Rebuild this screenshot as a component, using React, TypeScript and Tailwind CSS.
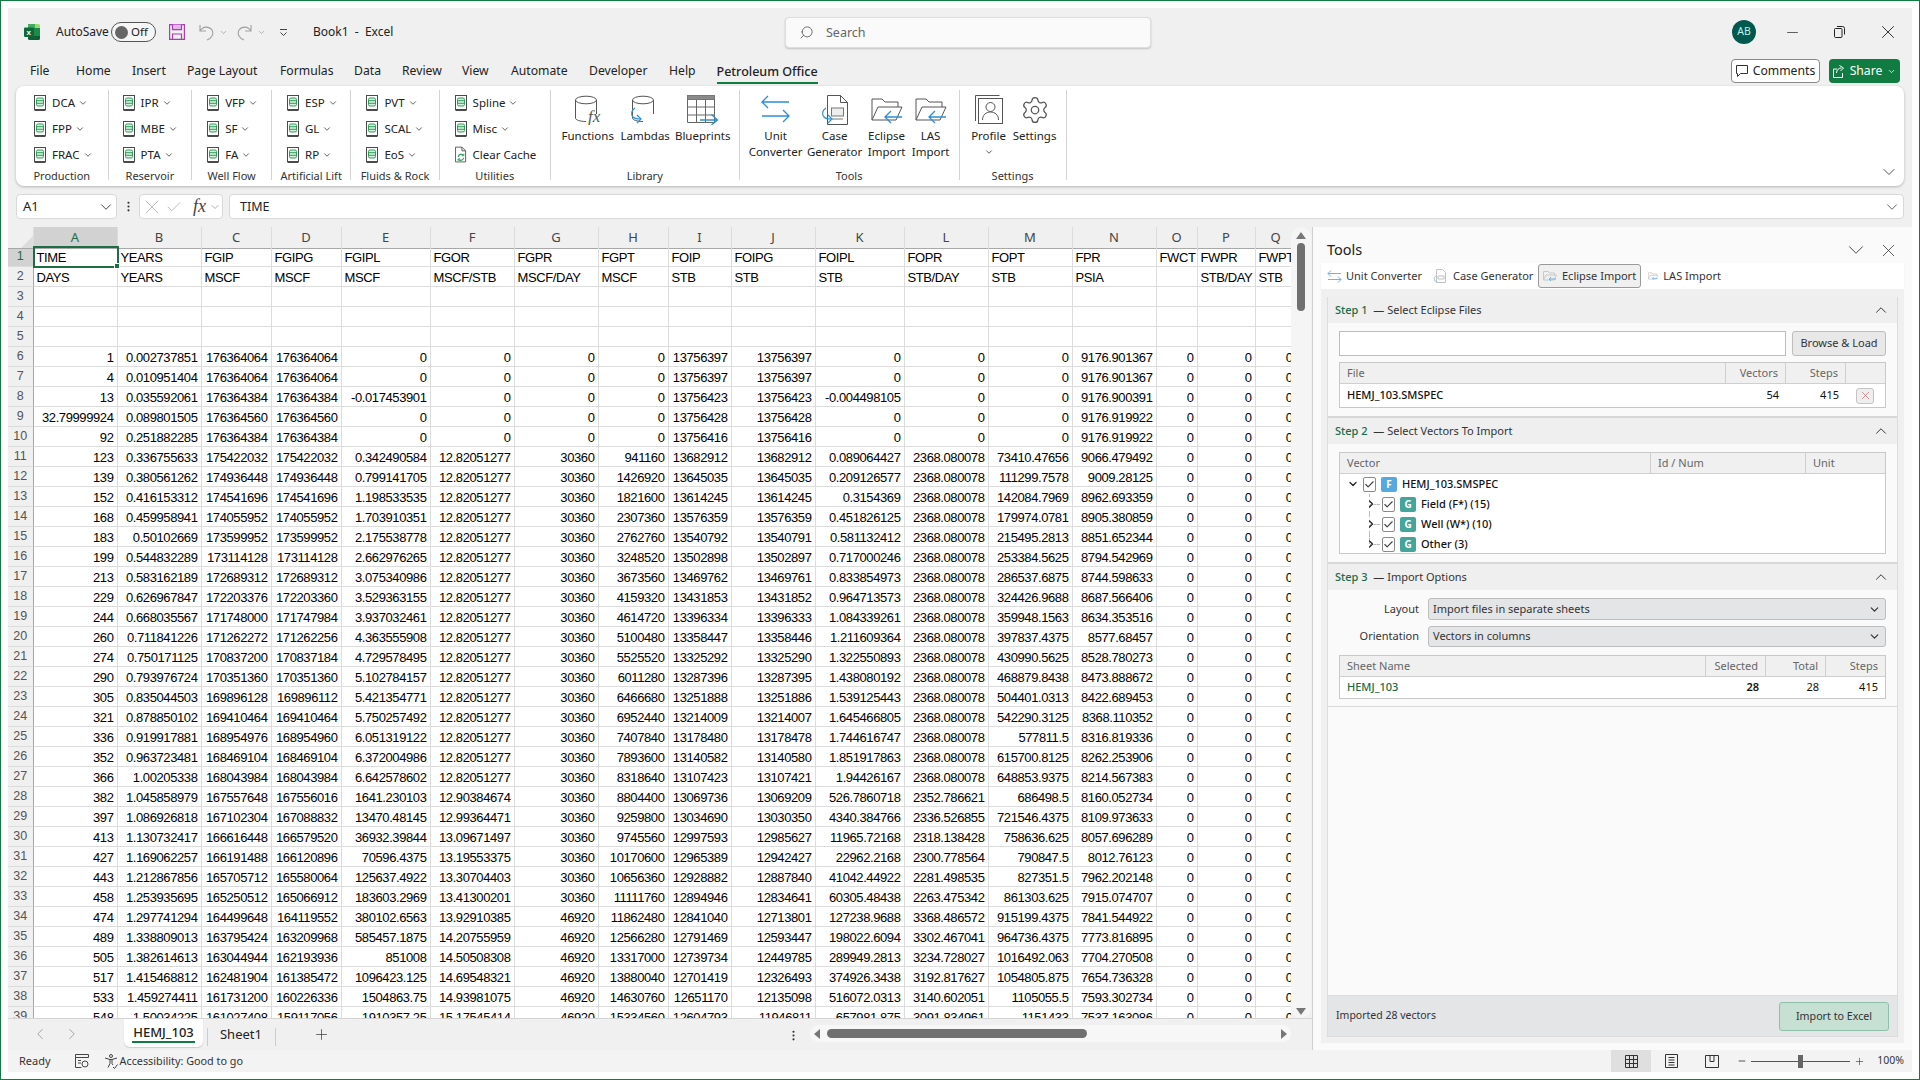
import { ChevronDown, ChevronLeft, ChevronRight, ChevronUp, Minus, Plus, Search, Settings, X, Check, MoreVertical } from 'lucide-react'

const colLetters = ['A','B','C','D','E','F','G','H','I','J','K','L','M','N','O','P','Q']
const gridCols = 'grid grid-cols-[25.5px_84px_84px_70px_70px_89px_84px_84px_70px_63px_84px_89px_84px_84px_84px_41px_58px_41px]'

const headRow1 = ['TIME','YEARS','FGIP','FGIPG','FGIPL','FGOR','FGPR','FGPT','FOIP','FOIPG','FOIPL','FOPR','FOPT','FPR','FWCT','FWPR','FWPT']
const headRow2 = ['DAYS','YEARS','MSCF','MSCF','MSCF','MSCF/STB','MSCF/DAY','MSCF','STB','STB','STB','STB/DAY','STB','PSIA','','STB/DAY','STB']

const F = '12.82051277'
const P = '2368.080078'
const dataRows = [
  `1,0.002737851,176364064,176364064,0,0,0,0,13756397,13756397,0,0,0,9176.901367`,
  `4,0.010951404,176364064,176364064,0,0,0,0,13756397,13756397,0,0,0,9176.901367`,
  `13,0.035592061,176364384,176364384,-0.017453901,0,0,0,13756423,13756423,-0.004498105,0,0,9176.900391`,
  `32.79999924,0.089801505,176364560,176364560,0,0,0,0,13756428,13756428,0,0,0,9176.919922`,
  `92,0.251882285,176364384,176364384,0,0,0,0,13756416,13756416,0,0,0,9176.919922`,
  `123,0.336755633,175422032,175422032,0.342490584,${F},30360,941160,13682912,13682912,0.089064427,${P},73410.47656,9066.479492`,
  `139,0.380561262,174936448,174936448,0.799141705,${F},30360,1426920,13645035,13645035,0.209126577,${P},111299.7578,9009.28125`,
  `152,0.416153312,174541696,174541696,1.198533535,${F},30360,1821600,13614245,13614245,0.3154369,${P},142084.7969,8962.693359`,
  `168,0.459958941,174055952,174055952,1.703910351,${F},30360,2307360,13576359,13576359,0.451826125,${P},179974.0781,8905.380859`,
  `183,0.50102669,173599952,173599952,2.175538778,${F},30360,2762760,13540792,13540791,0.581132412,${P},215495.2813,8851.652344`,
  `199,0.544832289,173114128,173114128,2.662976265,${F},30360,3248520,13502898,13502897,0.717000246,${P},253384.5625,8794.542969`,
  `213,0.583162189,172689312,172689312,3.075340986,${F},30360,3673560,13469762,13469761,0.833854973,${P},286537.6875,8744.598633`,
  `229,0.626967847,172203376,172203360,3.529363155,${F},30360,4159320,13431853,13431852,0.964713573,${P},324426.9688,8687.566406`,
  `244,0.668035567,171748000,171747984,3.937032461,${F},30360,4614720,13396334,13396333,1.084339261,${P},359948.1563,8634.353516`,
  `260,0.711841226,171262272,171262256,4.363555908,${F},30360,5100480,13358447,13358446,1.211609364,${P},397837.4375,8577.68457`,
  `274,0.750171125,170837200,170837184,4.729578495,${F},30360,5525520,13325292,13325290,1.322550893,${P},430990.5625,8528.780273`,
  `290,0.793976724,170351360,170351360,5.102784157,${F},30360,6011280,13287396,13287395,1.438080192,${P},468879.8438,8473.888672`,
  `305,0.835044503,169896128,169896112,5.421354771,${F},30360,6466680,13251888,13251886,1.539125443,${P},504401.0313,8422.689453`,
  `321,0.878850102,169410464,169410464,5.750257492,${F},30360,6952440,13214009,13214007,1.645466805,${P},542290.3125,8368.110352`,
  `336,0.919917881,168954976,168954960,6.051319122,${F},30360,7407840,13178480,13178478,1.744616747,${P},577811.5,8316.819336`,
  `352,0.963723481,168469104,168469104,6.372004986,${F},30360,7893600,13140582,13140580,1.851917863,${P},615700.8125,8262.253906`,
  `366,1.00205338,168043984,168043984,6.642578602,${F},30360,8318640,13107423,13107421,1.94426167,${P},648853.9375,8214.567383`,
  `382,1.045858979,167557648,167556016,1641.230103,12.90384674,30360,8804400,13069736,13069209,526.7860718,2352.786621,686498.5,8160.052734`,
  `397,1.086926818,167102304,167088832,13470.48145,12.99364471,30360,9259800,13034690,13030350,4340.384766,2336.526855,721546.4375,8109.973633`,
  `413,1.130732417,166616448,166579520,36932.39844,13.09671497,30360,9745560,12997593,12985627,11965.72168,2318.138428,758636.625,8057.696289`,
  `427,1.169062257,166191488,166120896,70596.4375,13.19553375,30360,10170600,12965389,12942427,22962.2168,2300.778564,790847.5,8012.76123`,
  `443,1.212867856,165705712,165580064,125637.4922,13.30704403,30360,10656360,12928882,12887840,41042.44922,2281.498535,827351.5,7962.202148`,
  `458,1.253935695,165250512,165066912,183603.2969,13.41300201,30360,11111760,12894946,12834641,60305.48438,2263.475342,861303.625,7915.074707`,
  `474,1.297741294,164499648,164119552,380102.6563,13.92910385,46920,11862480,12841040,12713801,127238.9688,3368.486572,915199.4375,7841.544922`,
  `489,1.338809013,163795424,163209968,585457.1875,14.20755959,46920,12566280,12791469,12593447,198022.6094,3302.467041,964736.4375,7773.816895`,
  `505,1.382614613,163044944,162193936,851008,14.50508308,46920,13317000,12739734,12449785,289949.2813,3234.728027,1016492.063,7704.270508`,
  `517,1.415468812,162481904,161385472,1096423.125,14.69548321,46920,13880040,12701419,12326493,374926.3438,3192.817627,1054805.875,7654.736328`,
  `533,1.459274411,161731200,160226336,1504863.75,14.93981075,46920,14630760,12651170,12135098,516072.0313,3140.602051,1105055.5,7593.302734`,
  `548,1.50034225,161027408,159117056,1910357.25,15.17545414,46920,15334560,12604793,11946811,657981.875,3091.834961,1151433,7537.163086`,
].map((r) => [...r.split(','), '0', '0', '0'])

const ROW_HEAD = 'flex items-center justify-center h-[20px] bg-[#f0f0f0] border-r border-r-[#a8a8a8] border-b border-b-[#dcdcdc] text-[12.5px] text-[#555] tracking-normal'
const CELL = 'h-[20px] leading-[21px] overflow-hidden whitespace-nowrap border-r border-b border-[#dcdcdc] px-[3px] text-black'

function SheetIcon() {
  return (
    <svg width="12" height="17" viewBox="0 0 12 17" className="shrink-0">
      <rect x="0.5" y="0.5" width="11" height="14" fill="#fff" stroke="#4a4a4a" />
      <path d="M0.5 15.5h11" stroke="#4a4a4a" />
      <rect x="2.5" y="3" width="7" height="8" rx="1.5" fill="#d6f0df" stroke="#2f9e5a" />
      <path d="M2.500 5.700h7M2.500 8.300h7" stroke="#2f9e5a" />
    </svg>
  )
}

function CacheIcon() {
  return (
    <svg width="12" height="18" viewBox="0 0 13 18" className="shrink-0">
      <path d="M0.5 0.5h7l4 4v12h-11z" fill="#fff" stroke="#555" />
      <path d="M7.5 0.5v4h4" fill="none" stroke="#555" />
      <path d="M3.5 11a3.2 3.2 0 0 1 5.6-1.6M9.5 12a3.2 3.2 0 0 1-5.6 1.6" fill="none" stroke="#2f9e5a" strokeWidth="1.3" />
      <path d="M9.6 7.6v2.2h-2.2M3.4 15.4v-2.2h2.2" fill="none" stroke="#2f9e5a" />
    </svg>
  )
}

function Cylinder({ children }: { children?: React.ReactNode }) {
  return (
    <svg width="30" height="30" viewBox="0 0 30 30">
      <path d="M2.5 5v18c0 2 4.5 3.5 10.5 3.5" fill="#fff" stroke="#555" />
      <path d="M23.5 5v14" fill="none" stroke="#555" />
      <ellipse cx="13" cy="5" rx="10.5" ry="3.8" fill="#fff" stroke="#555" />
      {children}
    </svg>
  )
}

function BlueCircleArrow({ x, y }: { x: number; y: number }) {
  return (
    <g transform={`translate(${x} ${y})`} fill="none" stroke="#2b8fd8" strokeWidth="1.2">
      <path d="M4 0C0.5 2-0.5 6 2 9c1.5 1.6 4 2 7 2" />
      <path d="M6 7l4 4-4 4" />
    </g>
  )
}

function FunctionsIcon() {
  return (
    <Cylinder>
      <text x="15" y="27" fontFamily="Liberation Serif, serif" fontStyle="italic" fontSize="17" fill="#555">fx</text>
    </Cylinder>
  )
}

function LambdasIcon() {
  return (
    <Cylinder>
      <BlueCircleArrow x={1} y={13} />
    </Cylinder>
  )
}

function BlueprintsIcon() {
  return (
    <svg width="32" height="30" viewBox="0 0 32 30">
      <rect x="0.5" y="0.5" width="27" height="4" fill="#8a8a8a" stroke="#777" />
      <path d="M0.5 4.5v23h27v-23M0.5 12h27M0.5 20h27M9.5 4.5v23M18.5 4.5v23" fill="none" stroke="#666" />
      <path d="M13 25h17M24.5 19.5l6 5.5-6 5" fill="none" stroke="#2b8fd8" strokeWidth="1.3" />
    </svg>
  )
}

function UnitIcon() {
  return (
    <svg width="30" height="30" viewBox="0 0 30 30" fill="none" stroke="#2b8fd8" strokeWidth="1.3">
      <path d="M1 7h27M7 1L1 7l6 6" />
      <path d="M1 21h27M22 15l6 6-6 6" />
    </svg>
  )
}

function CaseIcon() {
  return (
    <svg width="28" height="30" viewBox="0 0 28 30">
      <path d="M6.5 0.5h13l7 7v22h-20z" fill="#fff" stroke="#555" />
      <path d="M19.5 0.5v7h7" fill="none" stroke="#555" />
      <rect x="10.5" y="13" width="12" height="8" fill="#eee" stroke="#777" />
      <path d="M11 24h11" stroke="#777" />
      <BlueCircleArrow x={1} y={13} />
    </svg>
  )
}

function FolderIcon() {
  return (
    <svg width="32" height="30" viewBox="0 0 32 30">
      <path d="M1 25V4h10l3 3h13v5" fill="#fff" stroke="#555" />
      <path d="M1 25l6-13h24l-6 13z" fill="#fff" stroke="#555" />
      <path d="M31 22H14M20 16l-6 6 6 6" fill="none" stroke="#2b8fd8" strokeWidth="1.3" />
    </svg>
  )
}

function ProfileIcon() {
  return (
    <svg width="28" height="30" viewBox="0 0 28 30">
      <path d="M0.5 26V0.5h24" fill="none" stroke="#555" />
      <rect x="3.5" y="3.5" width="24" height="25" fill="#fff" stroke="#555" />
      <circle cx="15.5" cy="12" r="4.5" fill="none" stroke="#555" />
      <path d="M7.5 25c0-5 3.5-8 8-8s8 3 8 8" fill="none" stroke="#555" />
    </svg>
  )
}

function ExcelLogo() {
  return (
    <svg width="16" height="16" viewBox="0 0 16 16" className="shrink-0">
      <path d="M4 0h7v4H4z" fill="#3fae5f" />
      <path d="M11 0h3.5a1.5 1.5 0 0 1 1.500 1.500V4h-5z" fill="#9fd86c" />
      <path d="M4 4h12v8H4z" fill="#1d8a4a" />
      <path d="M4 12h12v2.500a1.500 1.500 0 0 1-1.500 1.500H5.500A1.500 1.500 0 0 1 4 14.500z" fill="#105e33" />
      <rect x="0" y="3.500" width="10" height="9.500" rx="1" fill="#0d6a38" />
      <text x="2.500" y="11" fontFamily="Liberation Sans, sans-serif" fontSize="8" fontWeight="700" fill="#fff">x</text>
    </svg>
  )
}

function SaveIcon() {
  return (
    <svg width="16" height="16" viewBox="0 0 16 16" fill="none" stroke="#a83db8" strokeWidth="1.200" className="shrink-0">
      <path d="M0.600 0.600h14.800v14.800H0.600z" />
      <path d="M3.500 0.600v5h9v-5" fill="#e4b6ea" />
      <path d="M3.500 15.400v-5.400h9v5.400" />
    </svg>
  )
}

function SmallBtn({ label, clear }: { label: string; clear?: boolean }) {
  return (
    <div className="flex items-center h-[26px] gap-[3px]">
      {clear ? <CacheIcon /> : <SheetIcon />}
      <span className="ml-[3px] text-[11.500px] text-[#222] whitespace-nowrap">{label}</span>
      {!clear && <ChevronDown size={10} strokeWidth={2} className="text-[#444]" />}
    </div>
  )
}

function SmallGroup({ label, items, width, pad }: { label: string; items: string[]; width: string; pad: string }) {
  return (
    <div className={`${width} flex flex-col h-[90px] border-r border-[#d4d4d4] shrink-0`}>
      <div className={`${pad} flex flex-col h-[78px] shrink-0`}>
        {items.map((i) => <SmallBtn key={i} label={i} clear={i === 'Clear Cache'} />)}
      </div>
      <GroupLabel>{label}</GroupLabel>
    </div>
  )
}

function GroupLabel({ children }: { children: string }) {
  return <div className="shrink-0 h-[16px] leading-[16px] text-center text-[11px] text-[#333] whitespace-nowrap">{children}</div>
}

function LargeBtn({ icon, lines, width, caret }: { icon: React.ReactNode; lines: string[]; width: string; caret?: boolean }) {
  return (
    <div className={`${width} shrink-0 flex flex-col items-center pt-[5px]`}>
      <div className="h-[30px] flex items-start justify-center">{icon}</div>
      <div className="mt-[3px] text-center text-[11.500px] leading-[16px] text-[#222] whitespace-nowrap">
        {lines.map((l) => <div key={l}>{l}</div>)}
        {caret && <ChevronDown size={10} strokeWidth={2} className="mx-auto mt-[3px] text-[#444]" />}
      </div>
    </div>
  )
}

function LargeGroup({ label, width, pad, children }: { label: string; width: string; pad: string; children: React.ReactNode }) {
  return (
    <div className={`${width} flex flex-col h-[90px] border-r border-[#d4d4d4] shrink-0`}>
      <div className={`${pad} flex h-[78px] shrink-0`}>{children}</div>
      <GroupLabel>{label}</GroupLabel>
    </div>
  )
}

function Ribbon() {
  return (
    <div className="mx-[8px] h-[100px] shrink-0 rounded-lg bg-white shadow-[0_1px_3px_rgba(0,0,0,0.25)] relative flex pt-[4px]">
      <SmallGroup label="Production" width="w-[92.6px]" pad="pl-[18px]" items={['DCA', 'FPP', 'FRAC']} />
      <SmallGroup label="Reservoir" width="w-[83.6px]" pad="pl-[14px]" items={['IPR', 'MBE', 'PTA']} />
      <SmallGroup label="Well Flow" width="w-[79.8px]" pad="pl-[15px]" items={['VFP', 'SF', 'FA']} />
      <SmallGroup label="Artificial Lift" width="w-[79.4px]" pad="pl-[15px]" items={['ESP', 'GL', 'RP']} />
      <SmallGroup label="Fluids & Rock" width="w-[88.2px]" pad="pl-[15px]" items={['PVT', 'SCAL', 'EoS']} />
      <SmallGroup label="Utilities" width="w-[111.4px]" pad="pl-[15px]" items={['Spline', 'Misc', 'Clear Cache']} />
      <LargeGroup label="Library" width="w-[188.600px]" pad="pl-[8px]">
        <LargeBtn width="w-[57.500px]" icon={<FunctionsIcon />} lines={['Functions']} />
        <LargeBtn width="w-[57.500px]" icon={<LambdasIcon />} lines={['Lambdas']} />
        <LargeBtn width="w-[57.500px]" icon={<BlueprintsIcon />} lines={['Blueprints']} />
      </LargeGroup>
      <LargeGroup label="Tools" width="w-[220px]" pad="pl-[6px]">
        <LargeBtn width="w-[60px]" icon={<UnitIcon />} lines={['Unit', 'Converter']} />
        <LargeBtn width="w-[58px]" icon={<CaseIcon />} lines={['Case', 'Generator']} />
        <LargeBtn width="w-[46px]" icon={<FolderIcon />} lines={['Eclipse', 'Import']} />
        <LargeBtn width="w-[42px]" icon={<FolderIcon />} lines={['LAS', 'Import']} />
      </LargeGroup>
      <LargeGroup label="Settings" width="w-[107px]" pad="pl-[9px]">
        <LargeBtn width="w-[40px]" icon={<ProfileIcon />} lines={['Profile']} caret />
        <LargeBtn width="w-[52px]" icon={<Settings size={30} strokeWidth={1} className="text-[#555]" />} lines={['Settings']} />
      </LargeGroup>
      <ChevronDown size={20} strokeWidth={1} className="absolute right-[5px] bottom-[4px] text-[#333]" />
    </div>
  )
}

const MENU = [
  ['File', 'w-[46px]'], ['Home', 'w-[56px]'], ['Insert', 'w-[55px]'], ['Page Layout', 'w-[93px]'], ['Formulas', 'w-[74px]'], ['Data', 'w-[48px]'],
  ['Review', 'w-[60px]'], ['View', 'w-[49px]'], ['Automate', 'w-[78px]'], ['Developer', 'w-[80px]'], ['Help', 'w-[47.500px]'],
]

function TitleBar() {
  return (
    <div className="h-[48px] shrink-0 flex items-center relative text-[12px] text-[#222]">
      <div className="ml-[16px]"><ExcelLogo /></div>
      <span className="ml-[16px] w-[55px]">AutoSave</span>
      <div className="w-[45px] h-[20px] rounded-full border border-[#555] flex items-center bg-white/40 px-[3px] gap-[3px]">
        <span className="w-[13px] h-[13px] rounded-full bg-[#666]" />
        <span className="text-[11.500px]">Off</span>
      </div>
      <div className="ml-[13px]"><SaveIcon /></div>
      <svg width="15" height="17" viewBox="0 0 15 17" fill="none" stroke="#a0a0a0" strokeWidth="1.100" className="ml-[14px]">
        <path d="M1 1v6h6M1 7c3-5 9-5 12-1 2 4 0 8-5 10" />
      </svg>
      <ChevronDown size={9} className="ml-[5px] text-[#a0a0a0]" />
      <svg width="15" height="17" viewBox="0 0 15 17" fill="none" stroke="#a0a0a0" strokeWidth="1.100" className="ml-[9px]">
        <path d="M14 1v6H8M14 7c-3-5-9-5-12-1-2 4 0 8 5 10" />
      </svg>
      <ChevronDown size={9} className="ml-[5px] text-[#a0a0a0]" />
      <svg width="9" height="9" viewBox="0 0 9 9" fill="none" stroke="#444" className="ml-[13px]">
        <path d="M1 1.500h7M1.500 4.500L4.500 7.500 7.500 4.500" />
      </svg>
      <span className="ml-[25px] whitespace-pre text-[12px]">Book1  -  Excel</span>
      <div className="absolute left-[777px] top-[9px] w-[366px] h-[31px] rounded bg-[#fafafa] border border-[#dedede] shadow-[0_1px_2px_rgba(0,0,0,0.2)] flex items-center pl-[13px]">
        <Search size={15} strokeWidth={1.200} className="text-[#444] -scale-x-100" />
        <span className="ml-[12px] pt-[1px] text-[12.500px] text-[#666]">Search</span>
      </div>
      <div className="absolute left-[1724px] top-[12px] w-[24px] h-[24px] rounded-full bg-[#00594f] text-[#bff0ee] text-[10.500px] flex items-center justify-center">AB</div>
      <Minus size={17} strokeWidth={1} className="absolute left-[1775.500px] top-[15.500px] text-[#222]" />
      <svg width="11" height="12" viewBox="0 0 11 12" fill="none" stroke="#222" className="absolute left-[1826px] top-[18px]">
        <rect x="0.500" y="2.500" width="7.500" height="9" rx="1" />
        <path d="M3 0.500h5.500a2 2 0 0 1 2 2v6" />
      </svg>
      <X size={22} strokeWidth={1} className="absolute left-[1869px] top-[13px] text-[#222]" />
    </div>
  )
}

function MenuRow() {
  return (
    <div className="h-[30px] shrink-0 flex items-center pl-[22px] pr-[12px] text-[12.200px] text-[#222]">
      {MENU.map(([m, w]) => <span key={m} className={`${w} pt-[1px]`}>{m}</span>)}
      <span className="h-[26px] leading-[27px] border-b-2 border-[#107c41] font-medium whitespace-nowrap text-[12.500px]">Petroleum Office</span>
      <div className="ml-auto flex items-center">
        <div className="w-[89px] h-[24px] bg-white border border-[#8a8a8a] rounded flex items-center justify-center gap-[5px]">
          <svg width="12" height="12" viewBox="0 0 12 12" fill="none" stroke="#333"><path d="M0.500 0.500h11v8h-7l-3 3v-3h-1z" /></svg>
          <span>Comments</span>
        </div>
        <div className="ml-[9px] w-[71px] h-[24px] bg-[#107c41] rounded text-white flex items-center justify-center gap-[5px]">
          <svg width="12" height="13" viewBox="0 0 12 13" fill="none" stroke="#fff"><path d="M4 4H0.500v8.500h9V8M3.500 8c0-3 2-5 5-5M6.500 0.500L10.500 3 7.500 6" /></svg>
          <span>Share</span>
          <ChevronDown size={9} strokeWidth={2} />
        </div>
      </div>
    </div>
  )
}

function FormulaBar() {
  return (
    <div className="h-[25px] mt-[8px] shrink-0 flex items-stretch px-[8px] gap-[0px] text-[13px] text-[#222]">
      <div className="w-[101px] bg-white border border-[#d8d8d8] rounded flex items-center justify-between pl-[6px] pr-[1px]">
        <span className="pt-[1px]">A1</span>
        <ChevronDown size={18} strokeWidth={1.200} className="text-[#333]" />
      </div>
      <div className="w-[22px] flex items-center justify-center"><MoreVertical size={13} strokeWidth={2} className="text-[#333]" /></div>
      <div className="w-[84px] bg-white border border-[#d8d8d8] rounded flex items-center">
        <X size={24} strokeWidth={0.800} className="shrink-0 text-[#aaa]" />
        <Check size={18} strokeWidth={1} className="shrink-0 ml-[1px] text-[#aaa]" />
        <span className="ml-[10px] [font-family:'Liberation_Serif',serif] italic text-[18px] text-[#444]">fx</span>
        <ChevronDown size={12} strokeWidth={1.200} className="shrink-0 ml-[3px] text-[#777]" />
      </div>
      <div className="ml-[6px] flex-1 bg-white border border-[#d8d8d8] rounded flex items-center justify-between pl-[10px] pr-[2px]">
        <span className="pt-[1px] text-[12.500px]">TIME</span>
        <ChevronDown size={18} strokeWidth={1} className="text-[#333]" />
      </div>
    </div>
  )
}

function Sheet() {
  return (
    <div className="flex-1 flex flex-col min-h-0 [font-family:'Liberation_Sans',sans-serif] text-[13px] tracking-[-0.4px] overflow-hidden bg-white">
      <div className={`${gridCols} h-[20px] shrink-0`}>
        <div className="bg-[#f0f0f0] border-b border-b-[#a8a8a8] border-r border-r-[#dcdcdc] relative overflow-hidden">
          <div className="absolute right-0 bottom-0 w-0 h-0 border-l-[12px] border-b-[12px] border-l-transparent border-b-[#dcdcdc]" />
        </div>
        {colLetters.map((c) => (
          <div key={c} className={`flex items-center justify-center pt-[1px] border-r border-r-[#dcdcdc] border-b border-b-[#a8a8a8] text-[13px] tracking-normal [font-family:'Noto_Sans',sans-serif] ${c === 'A' ? 'bg-[#d2d2d2] text-[#1f6e43]' : 'bg-[#f0f0f0] text-[#444]'}`}>{c}</div>
        ))}
      </div>
      <div className={gridCols}>
        <div className={`${ROW_HEAD} !bg-[#d2d2d2] !text-[#1f6e43]`}>1</div>
        {headRow1.map((h, i) => (
          <div key={h} className={`${CELL} ${i === 0 ? 'relative outline-2 -outline-offset-1 outline-[#1f6e43] overflow-visible z-10' : ''}`}>
            {h}
            {i === 0 && <span className="absolute -right-[3px] -bottom-[3px] w-[6px] h-[6px] bg-[#1f6e43] border border-white" />}
          </div>
        ))}
        <div className={ROW_HEAD}>2</div>
        {headRow2.map((h, i) => <div key={i} className={CELL}>{h}</div>)}
        {[3, 4, 5].map((n) => [
          <div key={n} className={ROW_HEAD}>{n}</div>,
          ...colLetters.map((c) => <div key={c + n} className={CELL} />),
        ])}
        {dataRows.map((r, n) => [
          <div key={n} className={ROW_HEAD}>{n + 6}</div>,
          ...r.map((v, i) => <div key={i + '-' + n} className={`${CELL} text-right`}>{v}</div>),
        ])}
      </div>
    </div>
  )
}

function VScroll() {
  return (
    <div className="w-[20px] shrink-0 flex flex-col items-center bg-[#f5f5f5] h-full rounded-full">
      <div className="mt-[5px] w-0 h-0 border-x-[5px] border-b-[7px] border-x-transparent border-b-[#777]" />
      <div className="mt-[4px] w-[8px] h-[68px] bg-[#707070] rounded-full" />
      <div className="mt-auto mb-[3px] w-0 h-0 border-x-[5px] border-t-[7px] border-x-transparent border-t-[#777]" />
    </div>
  )
}

function SheetTabs() {
  return (
    <div className="h-[32px] shrink-0 flex items-start bg-[#f0f0f0] border-t border-[#d4d4d4] text-[13px] text-[#222] relative">
      <ChevronLeft size={18} strokeWidth={1} className="ml-[22.600px] mt-[6px] text-[#888]" />
      <ChevronRight size={18} strokeWidth={1} className="ml-[14.400px] mt-[6px] text-[#888]" />
      <div className="ml-[43px] w-[79px] h-[28px] bg-white rounded-b-md shadow-[0_1px_1px_rgba(0,0,0,0.15)] flex justify-center">
        <span className="h-[24px] leading-[26px] border-b-2 border-[#107c41] px-[1px] font-medium">HEMJ_103</span>
      </div>
      <div className="ml-[4px] mt-[9px] h-[18px] border-l border-[#ccc]" />
      <span className="ml-[12px] mt-[6px]">Sheet1</span>
      <div className="ml-[13px] mt-[9px] h-[18px] border-l border-[#ccc]" />
      <Plus size={17} strokeWidth={1} className="ml-[37px] mt-[7px] text-[#333]" />
      <MoreVertical size={13} strokeWidth={2} className="ml-[457px] mt-[10px] text-[#333]" />
      <div className="ml-[10px] mt-[6px] w-[481px] h-[17px] bg-[#f7f7f7] rounded-full flex items-center px-[4px] relative">
        <div className="w-0 h-0 border-y-[5px] border-r-[6px] border-y-transparent border-r-[#777]" />
        <div className="ml-[7px] w-[260px] h-[9px] bg-[#707070] rounded-full" />
        <div className="ml-auto w-0 h-0 border-y-[5px] border-l-[6px] border-y-transparent border-l-[#777]" />
      </div>
    </div>
  )
}

function PanelTableHead({ cols }: { cols: { t: string; w: string; right?: boolean }[] }) {
  return (
    <div className="flex h-[21px] bg-[#f0f0f0] border-b border-[#cfcfcf] text-[#666]">
      {cols.map((c) => (
        <div key={c.t + c.w} className={`${c.w} px-[7px] flex items-center border-r border-[#cfcfcf] last:border-r-0 ${c.right ? 'justify-end' : ''}`}>{c.t}</div>
      ))}
    </div>
  )
}

function StepHeader({ n, title }: { n: number; title: string }) {
  return (
    <div className="h-[26px] shrink-0 bg-[#efefef] flex items-center justify-between pl-[7px] pr-[7px] text-[11px] text-[#333]">
      <span className="pt-[1px]"><span className="text-[#1a6b45] font-medium">Step {n}</span>&nbsp; — {title}</span>
      <ChevronUp size={18} strokeWidth={1.300} className="text-[#333]" />
    </div>
  )
}

function CheckBox() {
  return (
    <span className="w-[13px] h-[15px] rounded-[2px] border border-[#8a8a8a] bg-white flex items-center justify-center shrink-0">
      <Check size={11} strokeWidth={2.500} className="text-[#444]" />
    </span>
  )
}

function TreeChild({ label, last }: { label: string; last?: boolean }) {
  return (
    <div className="h-[20px] flex items-center pl-[25px] relative">
      <span className={`absolute left-[29px] top-0 border-l border-dashed border-[#bbb] ${last ? 'h-[10px]' : 'h-[20px]'}`} />
      <span className="absolute left-[30px] top-[10px] w-[10px] border-t border-dashed border-[#bbb]" />
      <ChevronRight size={12} strokeWidth={2.500} className="shrink-0 text-[#222] relative" />
      <span className="ml-[5px] relative"><CheckBox /></span>
      <span className="ml-[5px] w-[16px] h-[15px] rounded-[2px] bg-[#45a59a] text-white text-[10px] font-bold flex items-center justify-center">G</span>
      <span className="ml-[5px] font-medium text-[#111]">{label}</span>
    </div>
  )
}

function ToolTab({ icon, label, active, cls }: { icon: React.ReactNode; label: string; active?: boolean; cls: string }) {
  return (
    <div className={`${cls} h-[24px] flex items-center shrink-0 rounded-[3px] ${active ? 'bg-[#f0f0f0] border border-[#999]' : ''}`}>
      {icon}
      <span className="text-[#333] whitespace-nowrap">{label}</span>
    </div>
  )
}

function TinyArrows() {
  return (
    <svg width="15" height="13" viewBox="0 0 15 13" fill="none" stroke="#6db3e6" className="mr-[4px]">
      <path d="M1 3.500h13M4 0.500l-3 3 3 3M1 9.500h13M11 6.500l3 3-3 3" />
    </svg>
  )
}

function TinyDoc() {
  return (
    <svg width="14" height="15" viewBox="0 0 14 15" fill="none" stroke="#c2c2c2" className="mr-[6px]">
      <path d="M3.500 0.500h6l3 3v10h-9zM5 7h6v3H5z" />
      <path d="M3 7C0.500 8.500 0.500 12 4 13" stroke="#8fc4ec" />
    </svg>
  )
}

function TinyFolder() {
  return (
    <svg width="14" height="13" viewBox="0 0 14 13" fill="none" stroke="#c8c8c8" className="mr-[5px]">
      <path d="M0.500 10V1.500h5l1 1.500h5v2M0.500 10l2.500-5h10.500l-2.500 5z" />
      <path d="M13 9H6M8 7L6 9l2 2" stroke="#6db3e6" />
    </svg>
  )
}

function ToolsPanel() {
  const fileCols = [
    { t: 'File', w: 'w-[386px]' },
    { t: 'Vectors', w: 'w-[60px]', right: true },
    { t: 'Steps', w: 'w-[60px]', right: true },
    { t: '', w: 'flex-1' },
  ]
  const vecCols = [
    { t: 'Vector', w: 'w-[311px]' },
    { t: 'Id / Num', w: 'w-[155px]' },
    { t: 'Unit', w: 'flex-1' },
  ]
  const sheetCols = [
    { t: 'Sheet Name', w: 'w-[366px]' },
    { t: 'Selected', w: 'w-[60px]', right: true },
    { t: 'Total', w: 'w-[60px]', right: true },
    { t: 'Steps', w: 'flex-1', right: true },
  ]
  return (
    <div className="w-[600px] shrink-0 h-full border-l border-[#cfcfcf] bg-[#fafafa] pl-[8px] pr-[8px] pb-[7px] flex flex-col text-[11px]">
      <div className="h-[36px] shrink-0 flex items-center justify-between pl-[6px] pr-[5px] pt-[10px]">
        <span className="text-[14.500px] text-[#222]">Tools</span>
        <div className="flex items-center gap-[9.500px] text-[#333]">
          <ChevronDown size={26} strokeWidth={0.800} />
          <X size={21} strokeWidth={0.900} />
        </div>
      </div>
      <div className="h-[26px] shrink-0 bg-white flex items-center pl-[6px] shadow-[0_1px_1px_rgba(0,0,0,0.08)]">
        <ToolTab cls="w-[106px]" icon={<TinyArrows />} label="Unit Converter" />
        <ToolTab cls="w-[105px]" icon={<TinyDoc />} label="Case Generator" />
        <ToolTab cls="w-[103px] pl-[4px]" active icon={<TinyFolder />} label="Eclipse Import" />
        <ToolTab cls="w-[80px] pl-[7px]" icon={<TinyFolder />} label="LAS Import" />
      </div>
      <div className="flex-1 min-h-0 bg-[#f0f0f0] px-[6px] pt-[8px] pb-[6px]">
        <div className="h-full flex flex-col bg-[#fafafa] border-x border-[#dcdcdc] border-b">
          <StepHeader n={1} title="Select Eclipse Files" />
          <div className="h-[95px] shrink-0 bg-[#fafafa] border-b-2 border-[#d8d8d8] px-[11px] pt-[8px]">
            <div className="flex h-[25px] gap-[6px]">
              <div className="w-[447px] bg-white border border-[#bdbdbd]" />
              <div className="flex-1 rounded-[3px] bg-[#e8e8e8] border border-[#bdbdbd] flex items-center justify-center text-[#333]">Browse &amp; Load</div>
            </div>
            <div className="mt-[6px] border border-[#c8c8c8] bg-white">
              <PanelTableHead cols={fileCols} />
              <div className="flex h-[23px] items-center text-[#111]">
                <span className="w-[386px] pl-[7px] font-medium">HEMJ_103.SMSPEC</span>
                <span className="w-[60px] px-[7px] text-right">54</span>
                <span className="w-[60px] px-[7px] text-right">415</span>
                <span className="ml-[10px] w-[18px] h-[16px] bg-[#eee] border border-[#c4c4c4] rounded-[3px] flex items-center justify-center">
                  <X size={13} strokeWidth={1} className="text-[#b0484f]" />
                </span>
              </div>
            </div>
          </div>
          <StepHeader n={2} title="Select Vectors To Import" />
          <div className="h-[120px] shrink-0 border-b-2 border-[#d8d8d8] px-[11px] pt-[8px]">
            <div className="border border-[#c8c8c8] bg-white h-[102px]">
              <PanelTableHead cols={vecCols} />
              <div className="h-[20px] flex items-center pl-[7px]">
                <ChevronDown size={12} strokeWidth={2.500} className="shrink-0 text-[#222]" />
                <span className="ml-[4px]"><CheckBox /></span>
                <span className="ml-[5px] w-[16px] h-[15px] rounded-[2px] bg-[#55a9e0] text-white text-[10px] font-bold flex items-center justify-center">F</span>
                <span className="ml-[5px] font-medium text-[#111]">HEMJ_103.SMSPEC</span>
              </div>
              <TreeChild label="Field (F*) (15)" />
              <TreeChild label="Well (W*) (10)" />
              <TreeChild label="Other (3)" last />
            </div>
          </div>
          <StepHeader n={3} title="Import Options" />
          <div className="h-[117px] shrink-0 border-b border-[#d8d8d8] px-[11px] pt-[8px] text-[#333]">
            <div className="flex items-center h-[22px]">
              <span className="w-[80px] text-right">Layout</span>
              <div className="ml-[9px] flex-1 h-full rounded-[3px] bg-[#e4e5e7] border border-[#bdbdbd] flex items-center justify-between px-[4px]">
                <span>Import files in separate sheets</span>
                <ChevronDown size={13} strokeWidth={2.200} />
              </div>
            </div>
            <div className="flex items-center h-[21px] mt-[6px]">
              <span className="w-[80px] text-right">Orientation</span>
              <div className="ml-[9px] flex-1 h-full rounded-[3px] bg-[#e4e5e7] border border-[#bdbdbd] flex items-center justify-between px-[4px]">
                <span>Vectors in columns</span>
                <ChevronDown size={13} strokeWidth={2.200} />
              </div>
            </div>
            <div className="mt-[8px] border border-[#c8c8c8] bg-white">
              <PanelTableHead cols={sheetCols} />
              <div className="flex h-[21px] items-center text-[#111]">
                <span className="w-[366px] pl-[7px] font-medium text-[#1a6b45]">HEMJ_103</span>
                <span className="w-[60px] px-[7px] text-right font-semibold">28</span>
                <span className="w-[60px] px-[7px] text-right">28</span>
                <span className="flex-1 px-[7px] text-right">415</span>
              </div>
            </div>
          </div>
          <div className="flex-1" />
          <div className="h-[41px] shrink-0 bg-[#e4e5e7] border-t border-[#dcdcdc] flex items-center justify-between pl-[8px] pr-[8px] text-[#333] text-[10.500px]">
            <span>Imported 28 vectors</span>
            <div className="w-[110px] h-[29px] rounded-[3px] bg-[#c6e0d3] border border-[#8fc0a8] flex items-center justify-center text-[10.700px]">Import to Excel</div>
          </div>
        </div>
      </div>
    </div>
  )
}

function StatusBar() {
  return (
    <div className="h-[22px] shrink-0 flex items-center bg-[#f3f3f3] text-[10.800px] text-[#333]">
      <span className="ml-[11px] text-[11px]">Ready</span>
      <svg width="14" height="14" viewBox="0 0 14 14" fill="none" stroke="#444" className="ml-[24px]">
        <path d="M0.500 0.500h13v3h-13zM0.500 3.500v10h6M3 6.500h3M3 9h3" />
        <circle cx="10" cy="10" r="3" />
      </svg>
      <svg width="15" height="15" viewBox="0 0 15 15" fill="none" stroke="#444" className="ml-[15px]">
        <circle cx="7" cy="2" r="1.500" />
        <path d="M1 4l5 1.500h2L13 4M6 5.500v4l-2 4M8 5.500v4l1 1.500M9 13l1.500 1.500 3-4" />
      </svg>
      <span className="ml-[1px]">Accessibility: Good to go</span>
      <div className="ml-auto h-full w-[40px] bg-[#dfdfdf] flex items-center justify-center">
        <svg width="13" height="13" viewBox="0 0 13 13" fill="none" stroke="#333">
          <path d="M0.500 0.500h12v12h-12zM4.500 0.500v12M8.500 0.500v12M0.500 4.500h12M0.500 8.500h12" />
        </svg>
      </div>
      <svg width="13" height="14" viewBox="0 0 13 14" fill="none" stroke="#333" className="ml-[14px]">
        <path d="M0.500 0.500h12v13h-12zM3.500 3.500h6M3.500 6h6M3.500 8.500h6M3.500 11h6" />
      </svg>
      <svg width="14" height="13" viewBox="0 0 14 13" fill="none" stroke="#333" className="ml-[27px]">
        <path d="M0.500 0.500h13v12h-13zM5 0.500v6h4v-6" />
      </svg>
      <Minus size={10} className="ml-[18px] text-[#333]" />
      <div className="ml-[4px] w-[99px] h-[1px] bg-[#555] relative">
        <div className="absolute left-[47px] -top-[6px] w-[5px] h-[13px] bg-[#666]" />
      </div>
      <Plus size={11} strokeWidth={1.300} className="ml-[4px] text-[#333]" />
      <span className="ml-[12px] mr-[8px] text-[10.500px]">100%</span>
    </div>
  )
}

export default function App() {
  return (
    <div className="w-[1920px] h-[1080px] bg-white border border-[#107c41] p-[7px] overflow-hidden [font-family:'Noto_Sans',sans-serif]">
      <div className="h-full flex flex-col bg-[#f0f0f0]">
        <TitleBar />
        <MenuRow />
        <Ribbon />
        <FormulaBar />
        <div className="mt-[8px] flex-1 min-h-0 flex">
          <div className="w-[1304px] shrink-0 flex flex-col h-full">
            <div className="flex-1 min-h-0 flex">
              <div className="w-[1282.500px] shrink-0 flex flex-col overflow-hidden"><Sheet /></div>
              <VScroll />
            </div>
            <SheetTabs />
          </div>
          <ToolsPanel />
        </div>
        <StatusBar />
      </div>
    </div>
  )
}
